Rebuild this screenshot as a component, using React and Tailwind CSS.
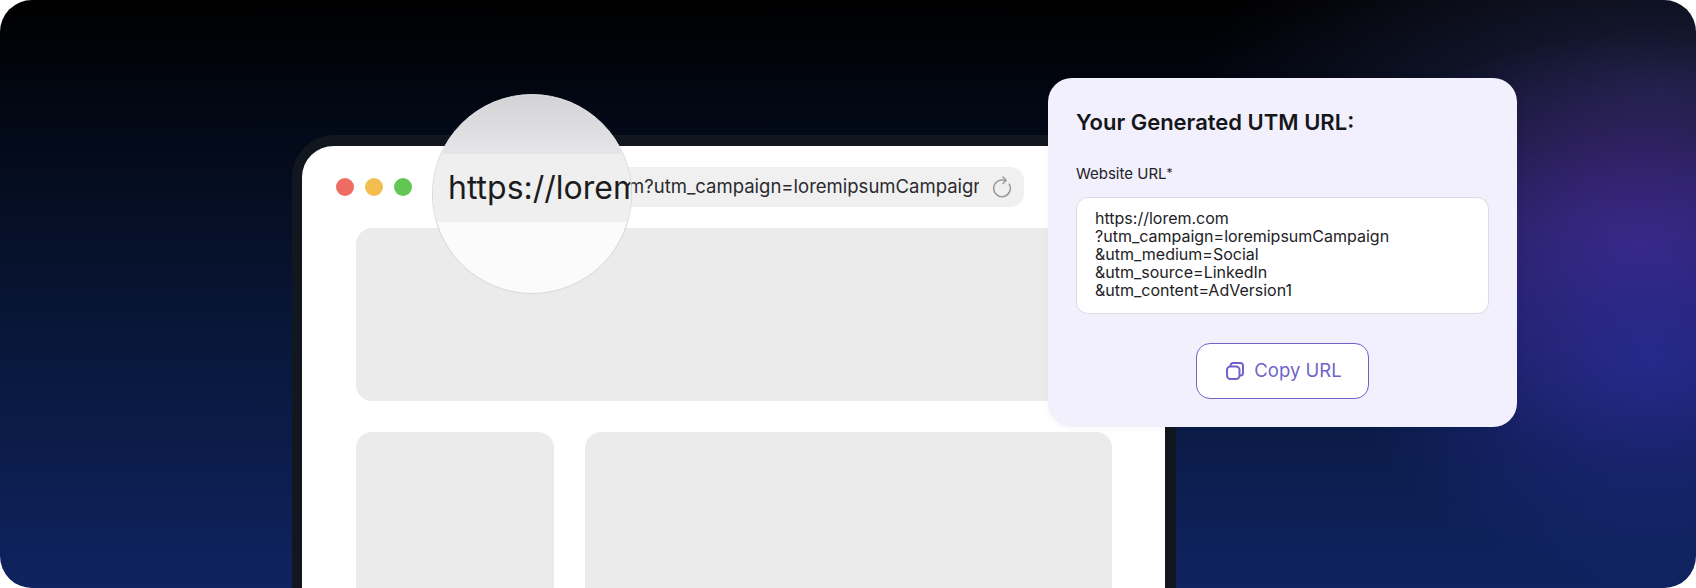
import React from 'react'

function RefreshIcon() {
    return (
        <svg width="22" height="22" viewBox="0 0 22 22" fill="none" stroke="#9a9a9a" strokeWidth="1.5" strokeLinecap="round" strokeLinejoin="round">
            <path d="M14 4.6a8.3 8.3 0 1 0 4.2 3.6" />
            <path d="M12 1 15.2 4.3 12 7.6" />
        </svg>
    )
}

function CopyIcon() {
    return (
        <svg width="18" height="18" viewBox="0 0 18 18" fill="none" stroke="#6f63c9" strokeWidth="2" strokeLinejoin="round">
            <rect x="1" y="4.5" width="12.5" height="12.5" rx="3.5" />
            <path d="M4.5 4.5V3.5A2.5 2.5 0 0 1 7 1h7.5A2.5 2.5 0 0 1 17 3.5V11a2.5 2.5 0 0 1-2.5 2.5h-1" />
        </svg>
    )
}

function BrowserWindow() {
    return (
        <div className="ml-[292px] mt-[135px] w-[884px] h-[453px] border-[11px] border-b-0 border-l-[10px] border-[#12161e] rounded-t-[42px] overflow-hidden bg-white">
            <div className="flex items-center h-[82px] pl-[34px] pr-[141px]">
                <div className="flex gap-[11.5px]">
                    <span className="w-[17.5px] h-[17.5px] rounded-full bg-[#ee6c64]"></span>
                    <span className="w-[17.5px] h-[17.5px] rounded-full bg-[#f4bd4f]"></span>
                    <span className="w-[17.5px] h-[17.5px] rounded-full bg-[#62c654]"></span>
                </div>
                <div className="flex-1 min-w-0 flex items-center h-10 ml-[30px] pl-[48px] pr-[11px] rounded-[14px] bg-[#f0f0f0]">
                    <div className="flex-1 min-w-0 overflow-hidden whitespace-nowrap text-[18.5px] text-[#2a2a2e]">https://lorem.com?utm_campaign=loremipsumCampaign</div>
                    <div className="ml-3"><RefreshIcon /></div>
                </div>
            </div>
            <div className="pl-[54px] pr-[53px]">
                <div className="h-[173px] rounded-2xl bg-[#ebebeb]"></div>
                <div className="flex gap-[31px] mt-[31px]">
                    <div className="w-[198px] h-[200px] rounded-2xl bg-[#ebebeb]"></div>
                    <div className="flex-1 h-[200px] rounded-2xl bg-[#ebebeb]"></div>
                </div>
            </div>
        </div>
    )
}

function Magnifier() {
    return (
        <div className="absolute left-[432px] top-[94px] w-[200px] h-[200px] rounded-full overflow-hidden border border-[#d8d8da] bg-[#fbfbfb]">
            <div className="h-[59px] bg-gradient-to-b from-[#d3d3d6] to-[#e6e6e8]"></div>
            <div className="h-[68px] flex items-center pl-[15px] bg-[#efefef] whitespace-nowrap text-[32px] text-[#1c1c1e]">https://lorem</div>
        </div>
    )
}

function UtmCard() {
    return (
        <div className="absolute left-[1048px] top-[78px] w-[469px] h-[349px] px-[28px] pt-[29px] rounded-3xl bg-[#f1f0fc] shadow-[0_0_8px_rgba(0,0,0,0.04)]">
            <h2 className="text-[22px] leading-[30px] font-semibold text-[#16161a]">Your Generated UTM URL:</h2>
            <p className="mt-[27px] text-[15px] leading-5 text-[#222226]">Website URL<span className="relative -top-[2px] text-[12px]">*</span></p>
            <div className="mt-[12px] h-[117px] pl-[18px] pt-[11px] rounded-xl border border-[#dcdce4] bg-white text-[16px] leading-[18px] text-[#222226]">
                <div>https://lorem.com</div>
                <div>?utm_campaign=loremipsumCampaign</div>
                <div>&amp;utm_medium=Social</div>
                <div>&amp;utm_source=LinkedIn</div>
                <div>&amp;utm_content=AdVersion1</div>
            </div>
            <div className="flex justify-center mt-[29px]">
                <button className="flex items-center justify-center gap-[10px] w-[173px] h-[56px] pl-[3px] rounded-[14px] border border-[#6f63c9] bg-white text-[18.5px] text-[#6f63c9]">
                    <CopyIcon />
                    Copy URL
                </button>
            </div>
        </div>
    )
}

function App() {
    return (
        <div className="relative w-[1696px] h-[588px] overflow-hidden bg-white font-['Inter',sans-serif]">
            <div className="relative w-full h-full overflow-hidden rounded-[32px] bg-[radial-gradient(ellipse_300px_230px_at_1650px_355px,rgba(38,44,150,0.8),rgba(38,44,150,0)),radial-gradient(ellipse_340px_210px_at_1640px_245px,rgba(78,40,140,0.85),rgba(78,40,140,0)),radial-gradient(ellipse_460px_240px_at_1660px_90px,rgba(40,46,90,0.6),rgba(40,46,90,0)),linear-gradient(180deg,#000000_0%,#030a1a_25%,#081637_55%,#0f2360_100%)]">
                <BrowserWindow />
                <Magnifier />
                <UtmCard />
            </div>
        </div>
    )
}

export default App
